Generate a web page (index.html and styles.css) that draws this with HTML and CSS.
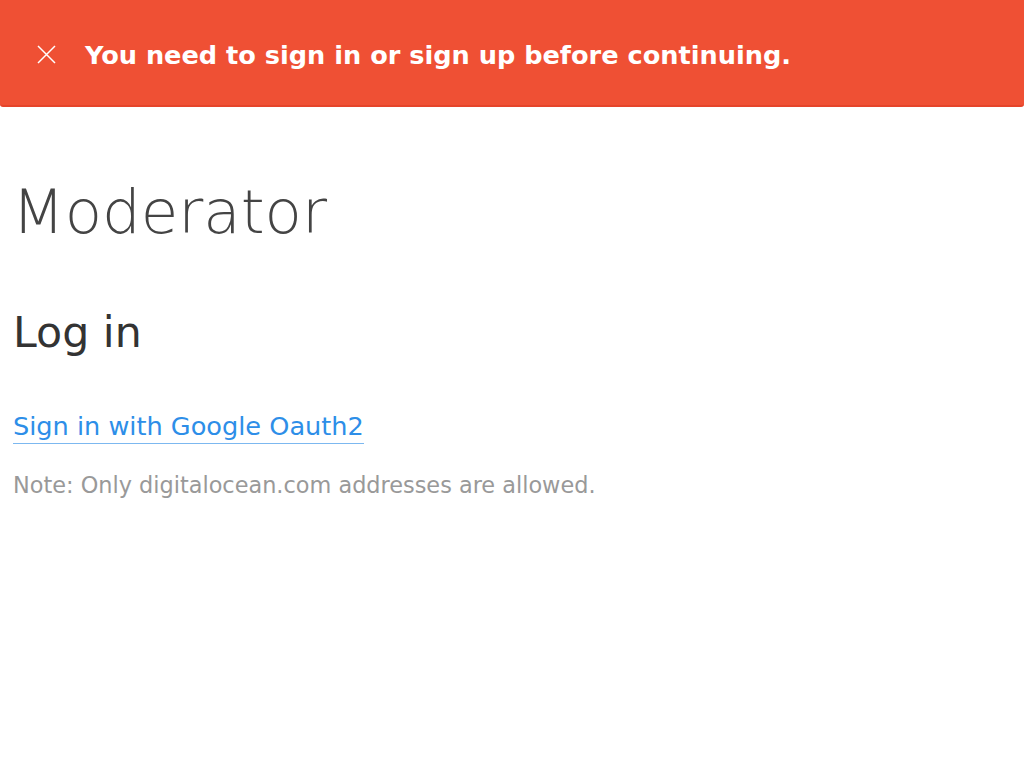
FILE: index.html
```html
<!DOCTYPE html>
<html lang="en">
<head>
<meta charset="utf-8">
<title>Moderator - Log in</title>
<link rel="stylesheet" href="styles.css">
</head>
<body>
<div class="flash">
  <button class="flash-close" aria-label="Close">
    <svg width="19" height="19" viewBox="0 0 19 19"><path d="M1 1 L18 18 M18 1 L1 18" stroke="#fff" stroke-width="1.5" fill="none"/></svg>
  </button>
  <p class="flash-text">You need to sign in or sign up before continuing.</p>
</div>
<main class="content">
  <h1 class="brand">Moderator</h1>
  <h2 class="title">Log in</h2>
  <a class="oauth-link" href="#">Sign in with Google Oauth2</a>
  <p class="note">Note: Only digitalocean.com addresses are allowed.</p>
</main>
</body>
</html>
```
FILE: styles.css
```css
html, body {
  margin: 0;
  padding: 0;
  background: #fff;
  font-family: "DejaVu Sans", sans-serif;
}
.flash {
  display: flex;
  align-items: center;
  gap: 29px;
  height: 107px;
  padding: 4px 0 0 37px;
  background: #ef5034;
  border-bottom: 2px solid #e5442a;
  border-radius: 0 0 3px 3px;
  box-sizing: border-box;
}
.flash-close {
  display: flex;
  padding: 0;
  margin: 0;
  border: 0;
  background: none;
  width: 19px;
  height: 19px;
}
.flash-text {
  margin: 0;
  color: #fff;
  font-weight: bold;
  font-size: 25.6px;
}
.content {
  display: flex;
  flex-direction: column;
  align-items: flex-start;
  padding: 0 13px;
}
.brand {
  margin: 74px 0 0 -1px;
  font-weight: 200;
  font-size: 61px;
  color: #444;
  line-height: 1;
}
.title {
  margin: 69px 0 0;
  font-weight: normal;
  font-size: 42.7px;
  color: #333;
  line-height: 1;
}
.oauth-link {
  margin-top: 55px;
  font-size: 25.6px;
  color: #2d8ee8;
  text-decoration: none;
  border-bottom: 1px solid #7cb8f0;
  line-height: 34px;
}
.note {
  margin: 28px 0 0;
  font-size: 22.4px;
  color: #999;
}
```
